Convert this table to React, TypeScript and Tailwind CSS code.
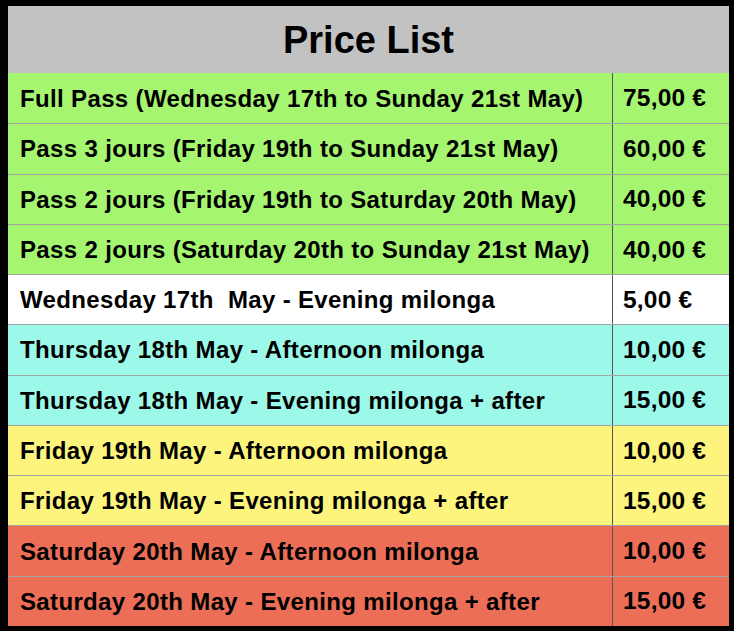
const rows: { label: string; price: string; bg: string }[] = [
  { label: 'Full Pass (Wednesday 17th to Sunday 21st May)', price: '75,00 €', bg: 'bg-[#a6f570]' },
  { label: 'Pass 3 jours (Friday 19th to Sunday 21st May)', price: '60,00 €', bg: 'bg-[#a6f570]' },
  { label: 'Pass 2 jours (Friday 19th to Saturday 20th May)', price: '40,00 €', bg: 'bg-[#a6f570]' },
  { label: 'Pass 2 jours (Saturday 20th to Sunday 21st May)', price: '40,00 €', bg: 'bg-[#a6f570]' },
  { label: 'Wednesday 17th\u00a0 May - Evening milonga', price: '5,00 €', bg: 'bg-white' },
  { label: 'Thursday 18th May - Afternoon milonga', price: '10,00 €', bg: 'bg-[#9cf8e8]' },
  { label: 'Thursday 18th May - Evening milonga + after', price: '15,00 €', bg: 'bg-[#9cf8e8]' },
  { label: 'Friday 19th May - Afternoon milonga', price: '10,00 €', bg: 'bg-[#fcf47d]' },
  { label: 'Friday 19th May - Evening milonga + after', price: '15,00 €', bg: 'bg-[#fcf47d]' },
  { label: 'Saturday 20th May - Afternoon milonga', price: '10,00 €', bg: 'bg-[#ec6e57]' },
  { label: 'Saturday 20th May - Evening milonga + after', price: '15,00 €', bg: 'bg-[#ec6e57]' },
];

export default function App() {
  return (
    <div className="w-[738px] h-[634px] bg-white font-['Liberation_Sans',Arial,sans-serif] text-black">
      <div className="w-[734px] h-[631px] border-black border-l-8 border-t-[6px] border-r-[5px] border-b-[5px] flex flex-col">
        <div className="h-[67px] bg-[#c2c2c2] flex items-center justify-center">
          <h1 className="text-[38px] font-bold leading-none">Price List</h1>
        </div>
        <div className="flex-1 grid grid-rows-11">
          {rows.map((row, i) => (
            <div
              key={i}
              className={`grid grid-cols-[604px_1fr] ${row.bg} ${i > 0 ? 'border-t border-[#a3a3a3]' : ''}`}
            >
              <div className="flex items-center pl-3 pt-px text-[24px] font-bold tracking-[0.35px] whitespace-nowrap">
                {row.label}
              </div>
              <div className="flex items-center pl-[10px] pt-px border-l border-[#555] text-[24.5px] font-bold tracking-[0.2px] whitespace-nowrap">
                {row.price}
              </div>
            </div>
          ))}
        </div>
      </div>
    </div>
  );
}
